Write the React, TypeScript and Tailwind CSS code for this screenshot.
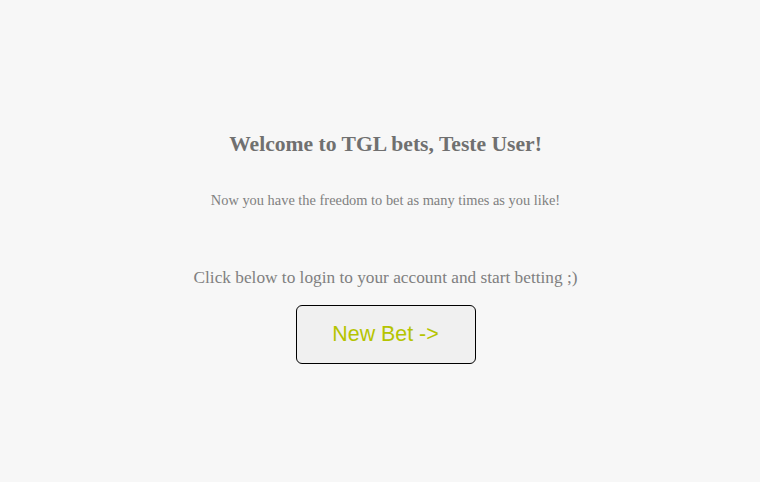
export default function App() {
  return (
    <div className="min-h-[482px] w-full bg-[#f7f7f7] flex flex-col items-center pl-[11px] font-['Liberation_Serif',serif]">
      <h1 className="mt-[130px] text-[21.6px] leading-[28px] font-bold text-[#707070]">
        Welcome to TGL bets, Teste User!
      </h1>
      <p className="mt-[33px] text-[14.4px] leading-[18px] text-[#808080]">
        Now you have the freedom to bet as many times as you like!
      </p>
      <p className="mt-[58px] text-[17.3px] leading-[22px] text-[#808080]">
        Click below to login to your account and start betting ;)
      </p>
      <button className="mt-[16px] w-[180px] h-[59px] rounded-[6px] border border-black bg-[#f0f0f0] text-[21.4px] text-[#b5c401] font-['Liberation_Sans',sans-serif]">
        New Bet -&gt;
      </button>
    </div>
  );
}
